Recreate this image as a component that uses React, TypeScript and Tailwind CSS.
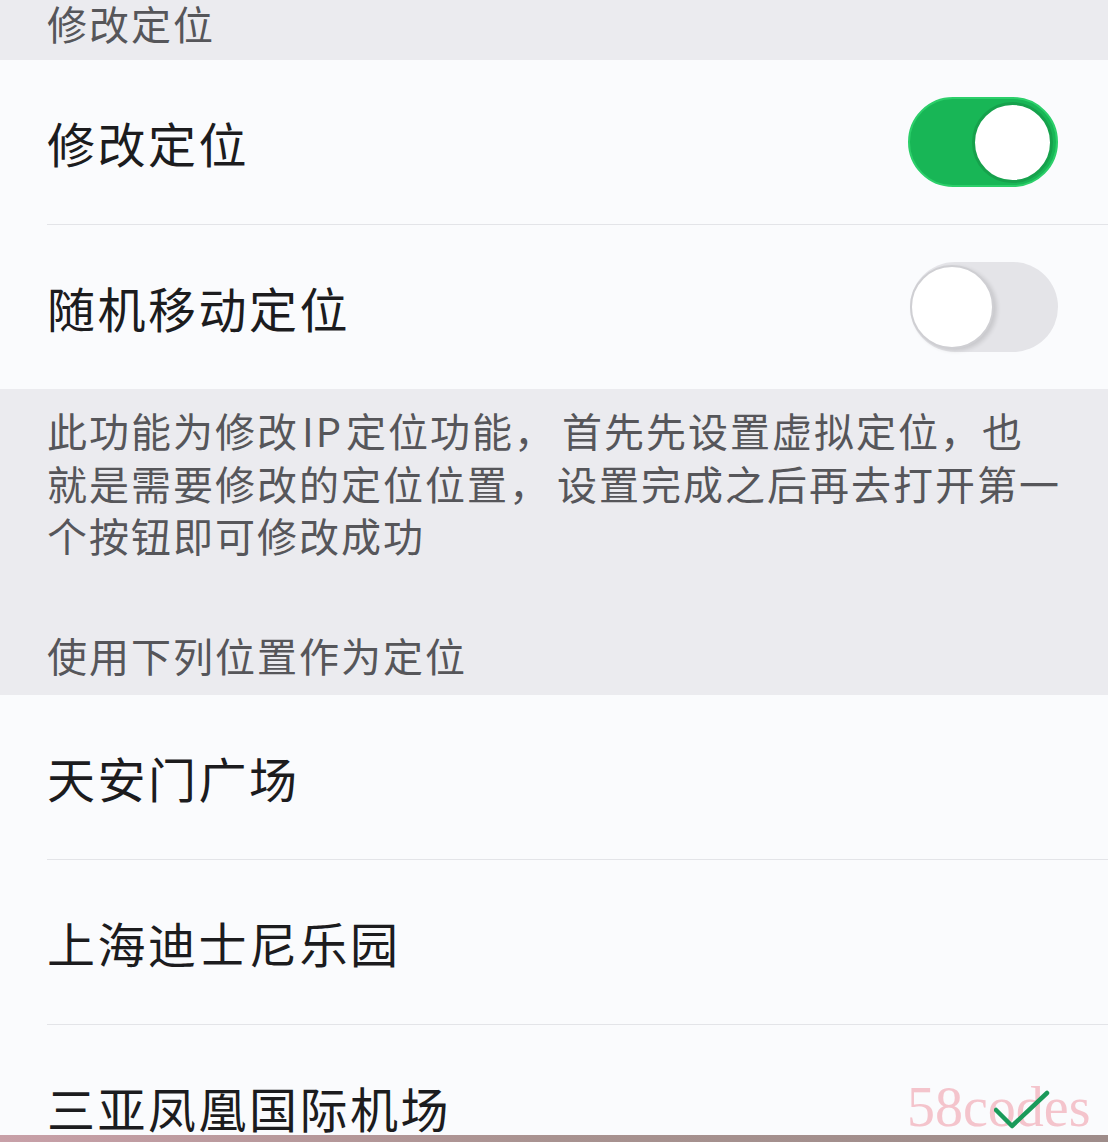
import React, { useState } from 'react';

const font = { fontFamily: '"Noto Sans CJK SC", "Noto Sans", sans-serif' };

interface ToggleProps {
  on: boolean;
  onChange: () => void;
}

const Toggle: React.FC<ToggleProps> = ({ on, onChange }) => {
  if (on) {
    return (
      <button
        onClick={onChange}
        className="flex items-center justify-end w-[150px] h-[90px] rounded-full bg-[#18b656] border-[2px] border-[#2ccf6a] p-[3px]"
      >
        <span className="block w-[81px] h-[81px] rounded-full bg-white border-[3px] border-[#16a14c]" />
      </button>
    );
  }
  return (
    <button
      onClick={onChange}
      className="flex items-center justify-start w-[148px] h-[90px] rounded-full bg-[#e4e4e8]"
    >
      <span className="block w-[84px] h-[84px] rounded-full bg-white border-[2px] border-[#cfcfd3] shadow-[3px_2px_4px_rgba(0,0,0,0.12)]" />
    </button>
  );
};

const Check = () => (
  <svg width="56" height="40" viewBox="0 0 56 40" fill="none">
    <path d="M2 20 L18 36 L53 3" stroke="#1a9a5a" strokeWidth="4.5" strokeLinecap="round" strokeLinejoin="round" />
  </svg>
);

const Gap = () => <span className="inline-block w-[6px]" />;

export default function App() {
  const [modify, setModify] = useState(true);
  const [random, setRandom] = useState(false);
  const [selected, setSelected] = useState(2);

  const places = ['天安门广场', '上海迪士尼乐园', '三亚凤凰国际机场'];

  return (
    <div className="relative w-[1108px] h-[1142px] overflow-hidden bg-[#fafbfd]" style={font}>
      {/* section header */}
      <div className="h-[60px] bg-[#ebebef] px-[47px] pt-[3px]">
        <div className="text-[40px] leading-[40px] tracking-[2px] text-[#56565a]">修改定位</div>
      </div>

      {/* toggles */}
      <div className="bg-[#fafbfd]">
        <div className="flex items-center justify-between h-[164px] pl-[47px] pr-[50px]">
          <span className="text-[48px] leading-[52px] tracking-[2.5px] text-[#1c1c1e]">修改定位</span>
          <Toggle on={modify} onChange={() => setModify(!modify)} />
        </div>
        <div className="ml-[47px] h-px bg-[#e3e4e8]" />
        <div className="flex items-center justify-between h-[164px] pl-[47px] pr-[50px]">
          <span className="text-[48px] leading-[52px] tracking-[2.5px] text-[#1c1c1e]">随机移动定位</span>
          <Toggle on={random} onChange={() => setRandom(!random)} />
        </div>
      </div>

      {/* description */}
      <div className="bg-[#ebebef] pl-[47px] pr-[20px] pt-[15px] pb-[18px]">
        <p className="text-[40px] leading-[52.5px] tracking-[2px] text-[#56565a] whitespace-nowrap">
          此功能为修改<span className="mx-[3px]">IP</span>定位功能，<Gap />首先先设置虚拟定位，也
          <br />
          就是需要修改的定位位置，<Gap />设置完成之后再去打开第一
          <br />
          个按钮即可修改成功
        </p>
        <div className="mt-[71px] text-[40px] leading-[44px] tracking-[2px] text-[#56565a]">
          使用下列位置作为定位
        </div>
      </div>

      {/* places */}
      <div className="bg-[#fafbfd]">
        {places.map((p, i) => (
          <div key={p}>
            {i > 0 && <div className="ml-[47px] h-px bg-[#e3e4e8]" />}
            <div
              onClick={() => setSelected(i)}
              className="flex items-center justify-between h-[164px] pl-[47px] pr-[58px]"
            >
              <span className="text-[48px] leading-[52px] tracking-[2.5px] text-[#1c1c1e]">{p}</span>
              {selected === i && (
                <span className="relative z-10 mt-[6px]">
                  <Check />
                </span>
              )}
            </div>
          </div>
        ))}
      </div>

      {/* watermark */}
      <div
        className="absolute left-[907px] top-[1080px] text-[56px] leading-[54px] text-[#f4c4cc] pointer-events-none"
        style={{ fontFamily: '"Liberation Serif", serif' }}
      >
        58codes
      </div>

      {/* bottom edge */}
      <div className="absolute left-0 right-0 bottom-0 h-[7px] bg-gradient-to-r from-[#c8a0a8] via-[#a89290] to-[#9e8c8a]" />
    </div>
  );
}
